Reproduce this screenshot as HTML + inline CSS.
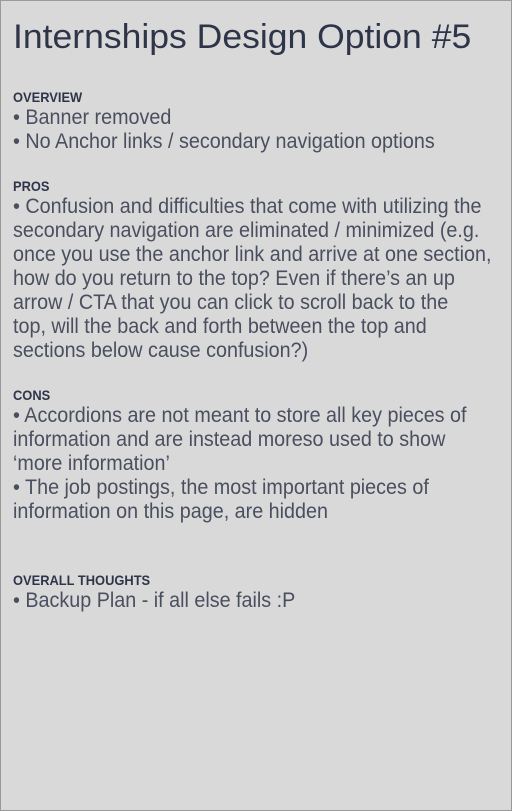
<!DOCTYPE html>
<html><head><style>
html,body{margin:0;padding:0}
body{width:512px;height:811px;background:#d9d9d9;position:relative;overflow:hidden;font-family:"Liberation Sans",sans-serif;color:#3a4052}
.frame{position:absolute;left:0;top:0;width:510px;height:809px;border:1px solid #9a9a9a}
.t{position:absolute;left:13px;top:18px;font-size:34px;color:#2f3549;white-space:nowrap;transform:scaleX(1.045);transform-origin:0 0}
.h{position:absolute;left:13px;font-size:14px;font-weight:bold;color:#2f3549;white-space:nowrap;transform:scaleX(0.92);transform-origin:0 0}
.b{position:absolute;left:13px;font-size:21px;line-height:24px;white-space:nowrap;color:#4a4f60;transform:scaleX(0.94);transform-origin:0 0}
</style></head><body>
<div class="frame"></div>
<div class="t">Internships Design Option #5</div>
<div class="h" style="top:89px">OVERVIEW</div>
<div class="b" style="top:106px">• Banner removed<br>• No Anchor links / secondary navigation options</div>
<div class="h" style="top:178px">PROS</div>
<div class="b" style="top:195px">• Confusion and difficulties that come with utilizing the<br>secondary navigation are eliminated / minimized (e.g.<br>once you use the anchor link and arrive at one section,<br>how do you return to the top? Even if there’s an up<br>arrow / CTA that you can click to scroll back to the<br>top, will the back and forth between the top and<br>sections below cause confusion?)</div>
<div class="h" style="top:387px">CONS</div>
<div class="b" style="top:404px">• Accordions are not meant to store all key pieces of<br>information and are instead moreso used to show<br>‘more information’<br>• The job postings, the most important pieces of<br>information on this page, are hidden</div>
<div class="h" style="top:572px">OVERALL THOUGHTS</div>
<div class="b" style="top:589px">• Backup Plan - if all else fails :P</div>
</body></html>
